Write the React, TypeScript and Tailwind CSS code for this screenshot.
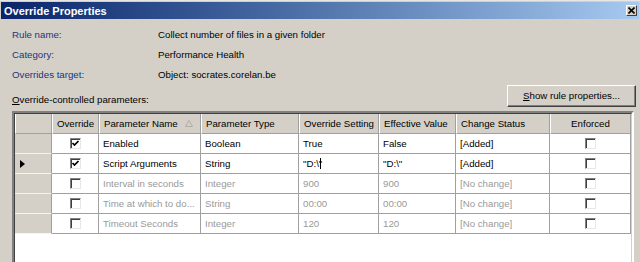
import type { ReactNode } from "react"

type Row = {
  name: string
  type: string
  setting: ReactNode
  effective: string
  status: string
  checked: boolean
  active: boolean
  selected?: boolean
}

const rows: Row[] = [
  { name: "Enabled", type: "Boolean", setting: "True", effective: "False", status: "[Added]", checked: true, active: true },
  {
    name: "Script Arguments",
    type: "String",
    setting: (
      <span className="flex items-center">
        "D:\"
        <span className="ml-[-2px] inline-block w-[1px] h-[11px] bg-black" />
      </span>
    ),
    effective: '"D:\\"',
    status: "[Added]",
    checked: true,
    active: true,
    selected: true,
  },
  { name: "Interval in seconds", type: "Integer", setting: "900", effective: "900", status: "[No change]", checked: false, active: false },
  { name: "Time at which to do...", type: "String", setting: "00:00", effective: "00:00", status: "[No change]", checked: false, active: false },
  { name: "Timeout Seconds", type: "Integer", setting: "120", effective: "120", status: "[No change]", checked: false, active: false },
]

function Checkbox({ checked }: { checked: boolean }) {
  return (
    <div className="w-[11px] h-[11px] border border-t-[#808080] border-l-[#808080] border-b-[#e8e8e8] border-r-[#e8e8e8] bg-white shadow-[inset_1px_1px_0_#404040] flex items-center justify-center">
      {checked && (
        <svg width="9" height="9" viewBox="0 0 9 9">
          <path d="M1.5 4 L3.5 6 L7.5 2" fill="none" stroke="#000" strokeWidth="1.7" />
        </svg>
      )}
    </div>
  )
}

const head = "h-full flex items-center px-[4px] whitespace-nowrap overflow-hidden border-r border-r-[#a0a0a0] border-l border-l-white border-b border-b-[#a0a0a0] bg-[#d4d0c8] text-black"
const cell = "h-full flex items-center px-[4px] border-r border-b border-[#a0a0a0] bg-white whitespace-nowrap overflow-hidden"

export default function App() {
  return (
    <div className="w-[640px] h-[262px] overflow-hidden bg-[#d4d0c8] text-[9.7px] leading-[12px] text-black" style={{ fontFamily: '"Liberation Sans", Arial, sans-serif' }}>
      <div className="h-[2px] border-t border-[#e8e6e0]" />
      <div className="mx-[1px] h-[17px] flex items-center justify-between pl-[3px] pr-[2px] bg-gradient-to-r from-[#0a246a] to-[#a6caf0]">
        <span className="text-white font-bold text-[11px]">Override Properties</span>
        <div className="w-[11px] h-[11px] bg-[#d4d0c8] border border-t-white border-l-white border-b-[#404040] border-r-[#404040] flex items-center justify-center">
          <svg width="7" height="7" viewBox="0 0 7 7">
            <path d="M0.5 0.5 L6.5 6.5 M6.5 0.5 L0.5 6.5" stroke="#000" strokeWidth="1.6" />
          </svg>
        </div>
      </div>

      <div className="mt-[6px] pl-[12px] grid grid-cols-[146px_1fr] auto-rows-[20px] items-center">
        <span className="text-[#23337e]">Rule name:</span>
        <span>Collect number of files in a given folder</span>
        <span className="text-[#23337e]">Category:</span>
        <span>Performance Health</span>
        <span className="text-[#23337e]">Overrides target:</span>
        <span>Object: socrates.corelan.be</span>
      </div>

      <div className="h-[24px] flex justify-between pl-[12px] pr-[4px]">
        <span className="self-end mb-[3px]">
          <span className="underline">O</span>verride-controlled parameters:
        </span>
        <button className="w-[129px] h-[22px] bg-[#d4d0c8] border border-t-white border-l-white border-b-[#404040] border-r-[#404040] shadow-[inset_-1px_-1px_0_#808080] flex items-center justify-center">
          <span>
            <span className="underline">S</span>how rule properties...
          </span>
        </button>
      </div>

      <div className="mt-[2px] ml-[12px] w-[622px] h-[170px] border-2 border-t-[#808080] border-l-[#808080] border-b-white border-r-white bg-white">
        <div className="h-full border border-t-[#404040] border-l-[#404040] border-b-[#d4d0c8] border-r-[#d4d0c8]">
          <div className="grid grid-cols-[37px_47px_102px_98px_80px_77px_94px_81px] auto-rows-[20px]">
            <div className={head} />
            <div className={`${head} justify-center`}>Override</div>
            <div className={`${head} justify-between`}>
              Parameter Name
              <svg width="8" height="7" viewBox="0 0 8 7" className="mr-[3px]">
                <path d="M4 0.5 L7.5 6.5 L0.5 6.5 Z" fill="none" stroke="#b0ada6" strokeWidth="1" />
              </svg>
            </div>
            <div className={head}>Parameter Type</div>
            <div className={head}>Override Setting</div>
            <div className={head}>Effective Value</div>
            <div className={head}>Change Status</div>
            <div className={`${head} justify-center`}>Enforced</div>

            {rows.map((r) => {
              const tone = r.active ? "text-black" : "text-[#9a9a9a]"
              return [
                <div key={r.name + "h"} className="h-full flex items-center pl-[5px] bg-[#d4d0c8] border-r border-r-[#a0a0a0] border-b border-b-[#f4f3f0]">
                  {r.selected && (
                    <svg width="5" height="8" viewBox="0 0 5 8">
                      <path d="M0 0 L5 4 L0 8 Z" fill="#000" />
                    </svg>
                  )}
                </div>,
                <div key={r.name + "o"} className={`${cell} justify-center`}>
                  <Checkbox checked={r.checked} />
                </div>,
                <div key={r.name + "n"} className={`${cell} ${tone}`}>{r.name}</div>,
                <div key={r.name + "t"} className={`${cell} ${tone}`}>{r.type}</div>,
                <div key={r.name + "s"} className={`${cell} ${tone}`}>{r.setting}</div>,
                <div key={r.name + "e"} className={`${cell} ${tone}`}>{r.effective}</div>,
                <div key={r.name + "c"} className={`${cell} ${tone}`}>{r.status}</div>,
                <div key={r.name + "f"} className={`${cell} justify-center`}>
                  <Checkbox checked={false} />
                </div>,
              ]
            })}
          </div>
        </div>
      </div>
    </div>
  )
}
